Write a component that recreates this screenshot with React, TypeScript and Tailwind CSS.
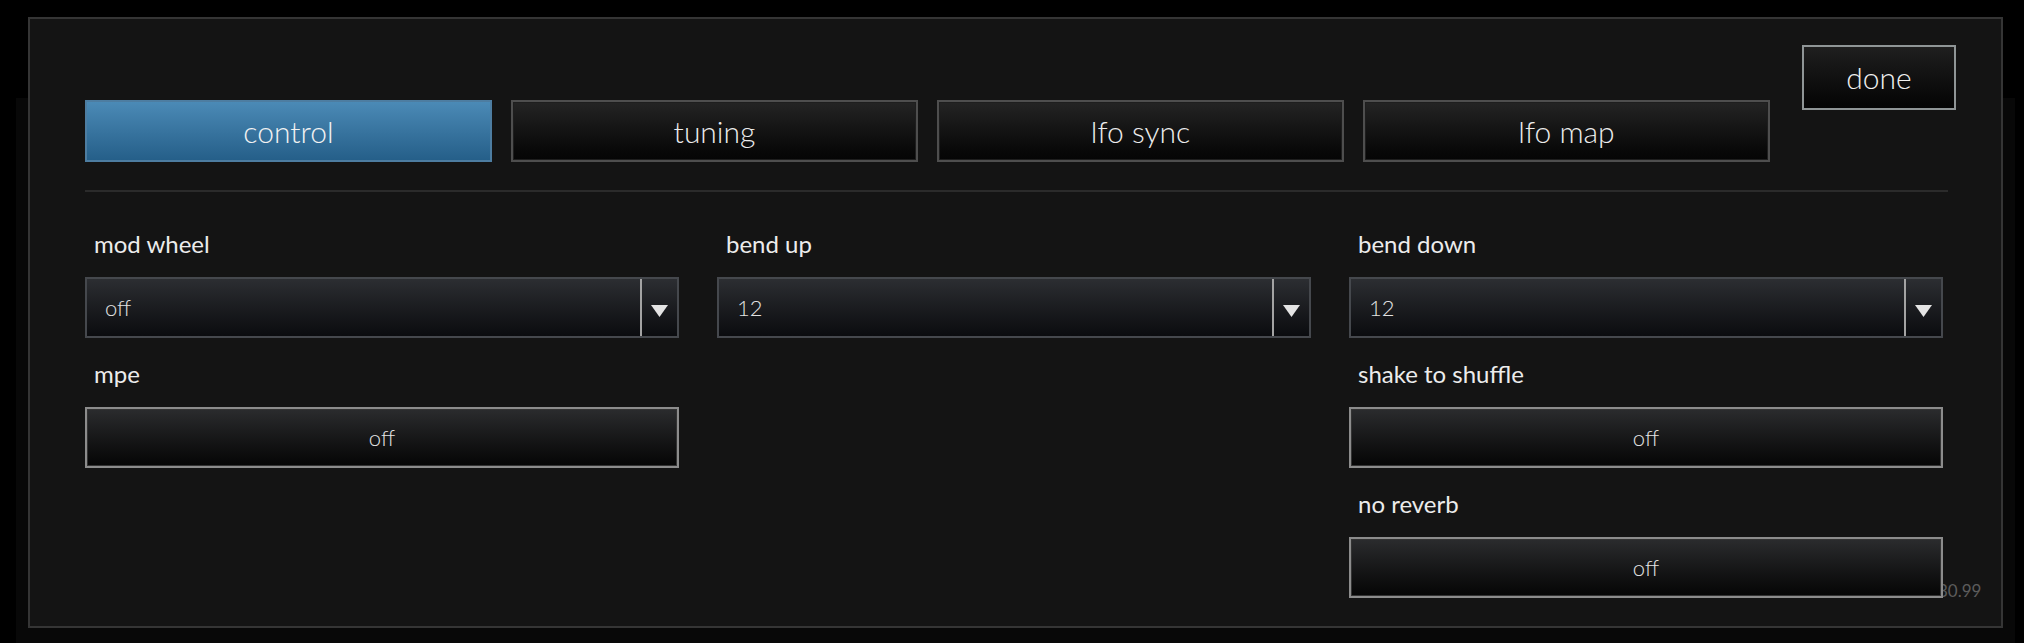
const FONT = { fontFamily: "Lato, 'Noto Sans', sans-serif" };

const TABS = ["control", "tuning", "lfo sync", "lfo map"];

function Label({ text }: { text: string }) {
  return (
    <div className="mb-[21px] h-[24px] pl-[9px] text-[24px] leading-[24px] text-[#ececec]">{text}</div>
  );
}

function Select({ label, value }: { label: string; value: string }) {
  return (
    <div className="flex flex-col">
      <Label text={label} />
      <div className="relative z-10 flex h-[61px] items-stretch border-2 border-[#45484d] bg-gradient-to-b from-[#2c2e32] to-[#0b0c0f]">
        <div className="flex flex-1 items-center pl-[18px] text-[22px] font-light text-[#e2e2e2]">{value}</div>
        <div className="flex w-[37px] items-center justify-center border-l-2 border-[#a3a3a3] pt-[6px]">
          <svg width="17" height="12" viewBox="0 0 17 12">
            <polygon points="0,0 17,0 8.5,12" fill="#e4e4e4" />
          </svg>
        </div>
      </div>
    </div>
  );
}

function Toggle({ label, value }: { label: string; value: string }) {
  return (
    <div className="flex flex-col">
      <Label text={label} />
      <button className="relative z-10 flex h-[61px] items-center justify-center border-2 border-[#8c8c8c] bg-gradient-to-b from-[#2b2c2e] to-[#060606] text-[22px] font-light text-[#e4e4e4] shadow-[inset_0_0_0_1px_#333]">
        {value}
      </button>
    </div>
  );
}

export default function App() {
  return (
    <div className="relative h-[643px] w-[2024px] overflow-hidden bg-black" style={FONT}>
      {/* faint backdrop behind the dialog */}
      <div className="absolute bottom-0 left-[16px] right-[9px] top-[98px] bg-[#080808]" />

      <div className="absolute left-[28px] top-[17px] h-[611px] w-[1975px] border-2 border-[#353535] bg-[#141414] px-[55px]">
        <div className="flex items-start">
          <div className="mt-[81px] flex gap-[19px]">
            {TABS.map((t, i) => (
              <button
                key={t}
                className={
                  i === 0
                    ? "flex h-[62px] w-[407px] items-center justify-center border-2 border-[#4d7da1] bg-gradient-to-b from-[#4b8ab6] to-[#255f89] text-[30px] font-light text-[#f2f2f2]"
                    : "flex h-[62px] w-[407px] items-center justify-center border-2 border-[#4e4e4e] bg-gradient-to-b from-[#242424] to-[#050505] text-[30px] font-light text-[#ececec] shadow-[inset_0_0_0_1px_#1e1e1e]"
                }
              >
                {t}
              </button>
            ))}
          </div>
          <button className="ml-auto mr-[-10px] mt-[26px] flex h-[65px] w-[154px] items-center justify-center border-2 border-[#8f9596] bg-gradient-to-b from-[#1f1f1f] to-[#050505] text-[30px] font-light text-[#f0f0f0]">
            done
          </button>
        </div>

        <div className="mt-[28px] h-[2px] w-[1863px] bg-[#2b2b2b]" />

        <div className="mt-[40px] grid w-[1858px] grid-cols-3 gap-x-[38px]">
          <div className="flex flex-col gap-[24px]">
            <Select label="mod wheel" value="off" />
            <Toggle label="mpe" value="off" />
          </div>
          <div className="flex flex-col gap-[24px]">
            <Select label="bend up" value="12" />
          </div>
          <div className="flex flex-col gap-[24px]">
            <Select label="bend down" value="12" />
            <Toggle label="shake to shuffle" value="off" />
            <Toggle label="no reverb" value="off" />
          </div>
        </div>

        <div className="absolute left-[1908px] top-[563px] text-[17px] leading-[17px] text-[#5c5c5c]">30.99</div>
      </div>
    </div>
  );
}
